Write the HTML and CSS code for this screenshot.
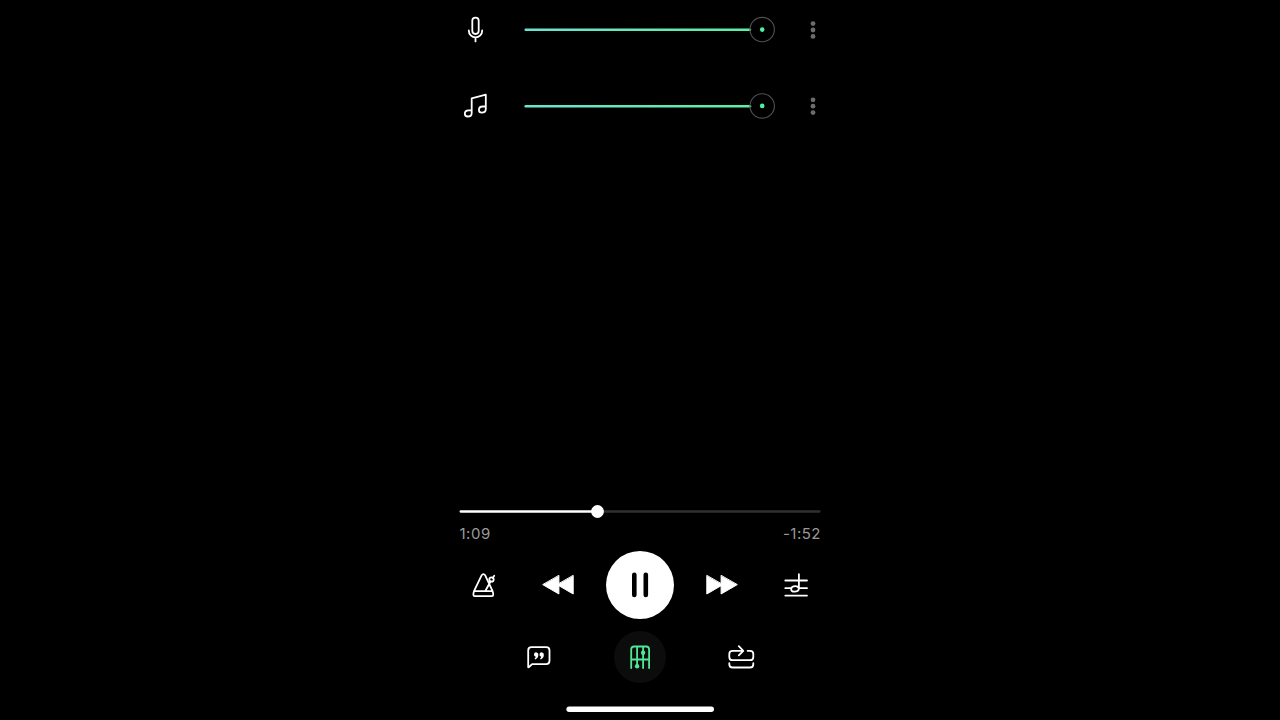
FILE: index.html
```
<!DOCTYPE html>
<html lang="en">
<head>
  <meta charset="UTF-8">
  <meta name="viewport" content="width=device-width, initial-scale=1.0">
  <title>Player</title>
  <link rel="stylesheet" href="styles.css">
</head>
<body>
  <svg class="defs" width="0" height="0">
    <defs>
      <linearGradient id="level" gradientUnits="userSpaceOnUse" x1="0" y1="0" x2="226" y2="0">
        <stop offset="0" stop-color="#6ce2d0"/>
        <stop offset="1" stop-color="#5cf0a4"/>
      </linearGradient>
    </defs>
  </svg>

  <div class="player">
    <div class="tracks">
      <div class="track">
        <svg class="icon" viewBox="0 0 32 32">
          <rect x="13.3" y="3.6" width="6.4" height="16.4" rx="3.2"/>
          <path d="M9.8 16.4a6.7 7 0 0 0 13.4 0M16.5 23.6v3.8"/>
        </svg>
        <svg class="slider" viewBox="0 0 252 32">
          <path class="line" d="M1.7 15.8H226"/>
          <circle class="knob" cx="238.2" cy="15.6" r="12.2"/>
          <circle class="center" cx="238.2" cy="15.6" r="2.3"/>
        </svg>
        <svg class="more" viewBox="0 0 6 32">
          <circle cx="3" cy="9.6" r="2.4"/>
          <circle cx="3" cy="16" r="2.4"/>
          <circle cx="3" cy="22.4" r="2.4"/>
        </svg>
      </div>
      <div class="track">
        <svg class="icon" viewBox="0 0 32 32">
          <path d="M12.7 23.2V8.3L26.8 4.7V19.3M12.7 20.3H9.6C7.2 20.3 5.8 21.9 5.8 23.8C5.8 25.5 7 26.5 8.7 26.5C11.1 26.5 12.7 25.1 12.7 22.9M26.8 16.5H23.7C21.3 16.5 19.9 18.1 19.9 20C19.9 21.7 21.1 22.7 22.8 22.7C25.2 22.7 26.8 21.3 26.8 19.1"/>
        </svg>
        <svg class="slider" viewBox="0 0 252 32">
          <path class="line" d="M1.7 16.2H226"/>
          <circle class="knob" cx="238.2" cy="15.9" r="12.2"/>
          <circle class="center" cx="238.2" cy="15.9" r="2.3"/>
        </svg>
        <svg class="more" viewBox="0 0 6 32">
          <circle cx="3" cy="9.8" r="2.4"/>
          <circle cx="3" cy="16.2" r="2.4"/>
          <circle cx="3" cy="22.6" r="2.4"/>
        </svg>
      </div>
    </div>

    <svg class="progress" viewBox="0 0 362 14">
      <path class="rest" d="M138 6.5H360.3"/>
      <path class="played" d="M1.8 6.5H138"/>
      <circle cx="138.5" cy="6.5" r="6.4"/>
    </svg>
    <div class="times">
      <span>1:09</span>
      <span>-1:52</span>
    </div>

    <div class="controls">
      <!-- metronome -->
      <svg class="icon" viewBox="0 0 32 32">
        <path d="M25.6 22.2L18.2 6.3Q17.6 5.1 16.4 5.1Q15.2 5.1 14.6 6.3L7 22.2M7 22.2H25.6Q27.4 27.2 24.4 27.2H8.2Q5.2 27.2 7 22.2ZM18.3 22L23.7 12.2M25.7 8.9L27.2 6.8"/>
        <circle cx="24.5" cy="10.5" r="2.2"/>
      </svg>
      <!-- rewind -->
      <svg class="icon solid rewind" viewBox="0 0 32 32">
        <path d="M16.9 6.7V25L1 15.8ZM31.2 6.7V25L15.3 15.8Z"/>
      </svg>
      <div class="play">
        <svg class="icon pause" viewBox="0 0 32 32">
          <path d="M10.3 5.7V25.9M21.8 5.7V25.9"/>
        </svg>
      </div>
      <!-- forward -->
      <svg class="icon solid forward" viewBox="0 0 32 32">
        <path d="M16.7 15.8L.8 25V6.7ZM31 15.8L15.1 25V6.7Z"/>
      </svg>
      <!-- chords -->
      <svg class="icon" viewBox="0 0 32 32">
        <path d="M5.3 11.5H27M5.3 19.2H10.8M18.9 19.2H27M5.3 26.6H27M18.9 5.2V19.2C18.9 21.5 16.9 22.6 14.4 22.6C12.4 22.6 11.2 21.9 11.2 20.4C11.2 18.4 13.1 17.2 15.6 17.2Q17.6 17.2 18.9 19.2"/>
      </svg>
    </div>

    <div class="tabs">
      <!-- lyrics -->
      <div class="tab">
        <svg class="icon" viewBox="0 0 32 32">
          <path d="M5.2 26V9.4Q5.2 6.1 8.5 6.1H23.2Q26.5 6.1 26.5 9.4V19.8Q26.5 23.1 23.2 23.1H9.1L6 26Q5.2 26.6 5.2 26Z"/>
          <path class="quote" d="M15.3 14.1A2.2 2.2 0 1 0 12.7 15.7Q12.6 16.9 11.5 17.6L12.3 18.5Q15.5 16.7 15.3 14.1ZM20.8 14.1A2.2 2.2 0 1 0 18.2 15.7Q18.1 16.9 17 17.6L17.8 18.5Q21 16.7 20.8 14.1Z"/>
        </svg>
      </div>
      <!-- mixer -->
      <div class="tab active">
        <svg class="icon" viewBox="0 0 32 32">
          <path d="M7.2 27V8.5Q7.2 5.5 10.2 5.5H22.1Q25.1 5.5 25.1 8.5V27M13.1 5.5V25M19.1 5.5V27M7.2 18.5H25.1"/>
          <circle class="dot" cx="19.1" cy="11.8" r="2.2"/>
          <circle class="dot" cx="13.1" cy="25.2" r="2.2"/>
        </svg>
      </div>
      <!-- loop -->
      <div class="tab">
        <svg class="icon" viewBox="0 0 32 32">
          <path d="M18 9.8H7.6Q4.3 9.8 4.3 13.1V15.9Q4.3 19.2 7.6 19.2H25Q28.3 19.2 28.3 15.9V13.1Q28.3 9.8 25 9.8H22.6M13.8 5.2L18.3 9.8L13.8 14.4M4.3 22.2V23.2Q4.3 26.5 7.6 26.5H25Q28.3 26.5 28.3 23.2V22.2"/>
        </svg>
      </div>
    </div>

    <svg class="home-bar" viewBox="0 0 148 6">
      <rect x="0.4" y="0.5" width="147.6" height="5.4" rx="2.7"/>
    </svg>
  </div>
</body>
</html>
```
FILE: styles.css
```
* {
  box-sizing: border-box;
}

body {
  margin: 0;
  background-color: #000;
  font-family: Inter, "Liberation Sans", sans-serif;
}

svg {
  display: block;
  flex: none;
}

.defs {
  position: absolute;
}

.player {
  display: flex;
  flex-direction: column;
  width: 362px;
  height: 720px;
  margin: 0 auto;
}

.icon {
  width: 32px;
  height: 32px;
  fill: none;
  stroke: #fff;
  stroke-width: 1.8;
  stroke-linecap: round;
  stroke-linejoin: round;
}

.icon.solid {
  fill: #fff;
  stroke-width: 1;
}

/* tracks */
.tracks {
  flex: 1;
  padding-top: 14px;
}

.track {
  display: flex;
  align-items: center;
  height: 32px;
  margin-bottom: 44px;
}

.slider {
  width: 252px;
  height: 32px;
  margin-left: 33px;
  fill: none;
}

.line {
  stroke: url(#level);
  stroke-width: 2.5;
  stroke-linecap: round;
}

.knob {
  stroke: #505050;
  stroke-width: 1.1;
}

.center {
  fill: #50f0a0;
}

.more {
  width: 6px;
  height: 32px;
  margin-left: 34px;
  fill: #6c6c6c;
}

/* progress */
.progress {
  width: 362px;
  height: 14px;
  fill: #fff;
  stroke-width: 2.4;
  stroke-linecap: round;
}

.played {
  stroke: #fff;
}

.rest {
  stroke: #303030;
}

.times {
  display: flex;
  justify-content: space-between;
  height: 20px;
  margin-top: 5px;
  padding-left: 0.5px;
  font-size: 15px;
  line-height: 20px;
  letter-spacing: 0.5px;
  color: #999;
}

/* controls */
.controls {
  display: flex;
  align-items: center;
  justify-content: space-between;
  height: 68px;
  margin-top: 7px;
  padding: 0 9px 0 8px;
}

.rewind {
  margin-right: -11px;
}

.forward {
  margin-left: -10px;
  margin-right: -1px;
}

.play {
  display: flex;
  align-items: center;
  justify-content: center;
  width: 68px;
  height: 68px;
  border-radius: 50%;
  background-color: #fff;
}

.icon.pause {
  stroke: #000;
  stroke-width: 4.6;
}

/* tabs */
.tabs {
  display: flex;
  justify-content: center;
  gap: 49px;
  margin-top: 12px;
}

.tab {
  display: flex;
  align-items: center;
  justify-content: center;
  width: 52px;
  height: 52px;
  border-radius: 50%;
}

.tab .quote {
  fill: #fff;
  stroke: none;
}

.tab.active {
  background-color: #0c0c0d;
}

.tab.active .icon {
  stroke: #4fe896;
}

.tab.active .dot {
  fill: #4fe896;
  stroke: none;
}

.home-bar {
  width: 148px;
  height: 6px;
  margin: 23px auto 8px;
  fill: #fff;
}
```
